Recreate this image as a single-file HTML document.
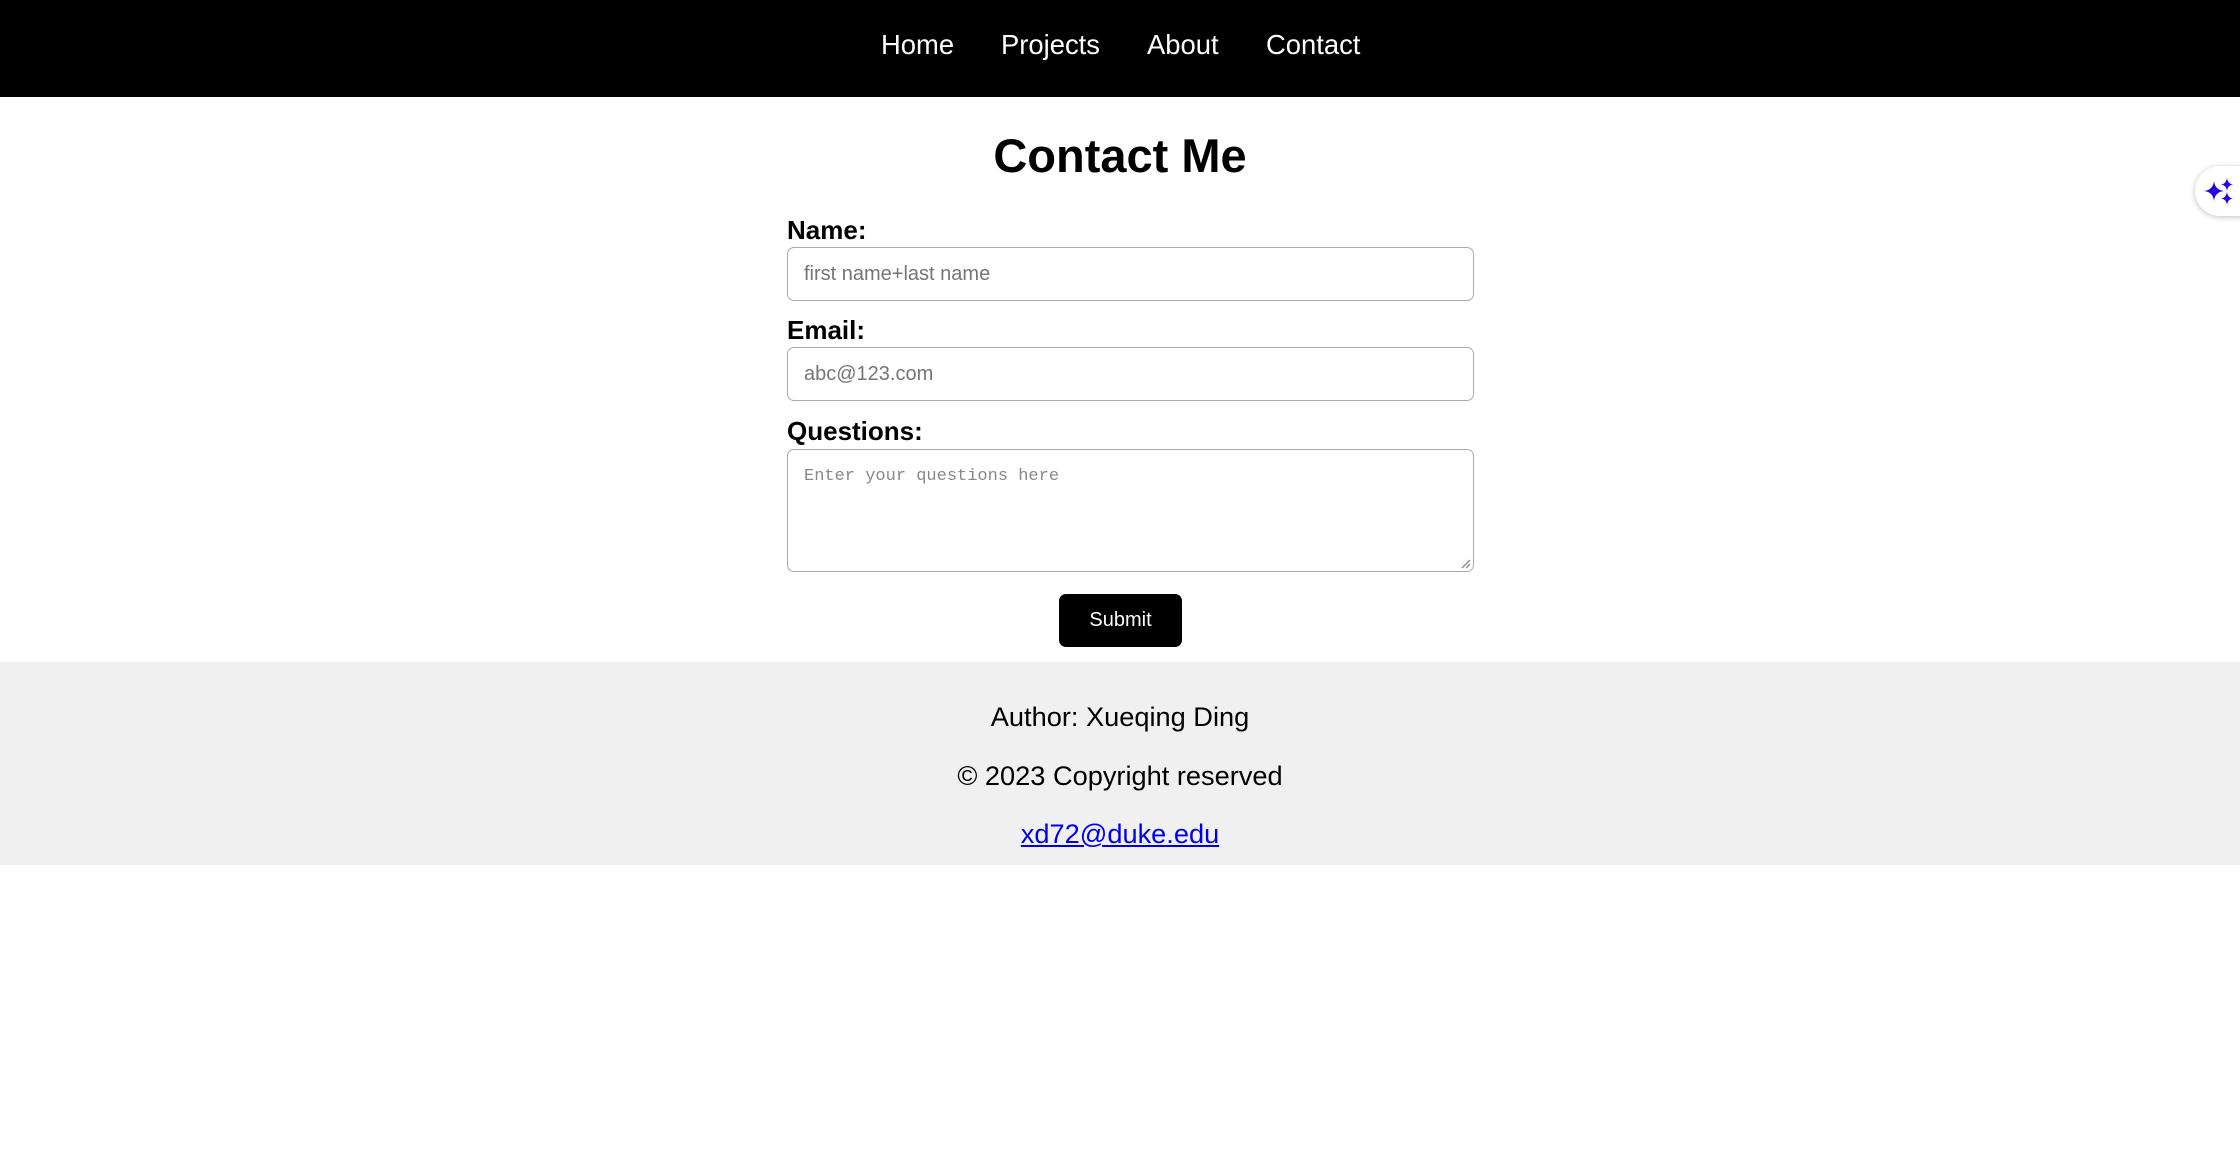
<!DOCTYPE html>
<html><head><meta charset="utf-8"><style>
html,body{margin:0;padding:0;background:#fff;width:2240px;height:1152px;overflow:hidden;font-family:"Liberation Sans",Arial,sans-serif}
.nav{position:absolute;left:0;top:0;width:2240px;height:97px;background:#000}
.nav span{position:absolute;top:29px;color:#fff;font-size:27.4px;line-height:32px}
.t{position:absolute;white-space:nowrap}
h1{position:absolute;margin:0;left:0;width:2240px;text-align:center;top:126px;font-size:47px;line-height:60px;font-weight:bold}
.lbl{position:absolute;left:787px;font-weight:bold;font-size:26px;line-height:30px}
.in{position:absolute;left:787px;width:687px;border:1.5px solid #aaa;border-radius:7px;box-sizing:border-box}
.ph{position:absolute;left:16px;color:#757575;font-size:20px}
.btn{position:absolute;left:1059px;top:594px;width:123px;height:53px;background:#000;border-radius:7px;color:#fff;font-size:20px;text-align:center;line-height:53px}
.foot{position:absolute;left:0;top:662px;width:2240px;height:203px;background:#f0f0f0}
.foot div{position:absolute;left:0;width:2240px;text-align:center;font-size:27.2px;line-height:32px}
</style></head><body>
<div class="nav">
<span style="left:881px">Home</span>
<span style="left:1001px">Projects</span>
<span style="left:1147px">About</span>
<span style="left:1266px">Contact</span>
</div>
<h1>Contact Me</h1>
<div class="lbl" style="top:215px">Name:</div>
<div class="in" style="top:247px;height:54px"><div class="ph" style="top:15px">first name+last name</div></div>
<div class="lbl" style="top:315px">Email:</div>
<div class="in" style="top:347px;height:54px"><div class="ph" style="top:15px">abc@123.com</div></div>
<div class="lbl" style="top:416px">Questions:</div>
<div class="in" style="top:449px;height:123px"><div class="ph" style="top:17px;font-family:'Liberation Mono',monospace;font-size:17px;color:#888">Enter your questions here</div>
<svg style="position:absolute;right:2px;bottom:2px" width="12" height="12"><path d="M11 3L3 11M11 7L7 11" stroke="#888" stroke-width="1.3"/></svg></div>
<div class="btn">Submit</div>
<div class="foot">
<div style="top:39px">Author: Xueqing Ding</div>
<div style="top:98px">© 2023 Copyright reserved</div>
<div style="top:156px"><span style="color:#0000ee;text-decoration:underline">xd72@duke.edu</span></div>
</div>
<div style="position:absolute;left:2195px;top:166px;width:70px;height:50px;border-radius:25px;background:#fff;box-shadow:0 1px 6px rgba(0,0,0,.25)"></div>
<svg style="position:absolute;left:2200px;top:172px" width="40" height="40" viewBox="0 0 40 40">
<path d="M14 9Q15 18 24 19Q15 20 14 29Q13 20 4 19Q13 18 14 9Z" fill="#2a00e6"/>
<path d="M27 6Q27.8 12 33 12.5Q27.8 13 27 19Q26.2 13 21 12.5Q26.2 12 27 6Z" fill="#2a00e6"/>
<path d="M27 20Q27.8 26 33 26.5Q27.8 27 27 33Q26.2 27 21 26.5Q26.2 26 27 20Z" fill="#2a00e6"/>
</svg>
</body></html>
